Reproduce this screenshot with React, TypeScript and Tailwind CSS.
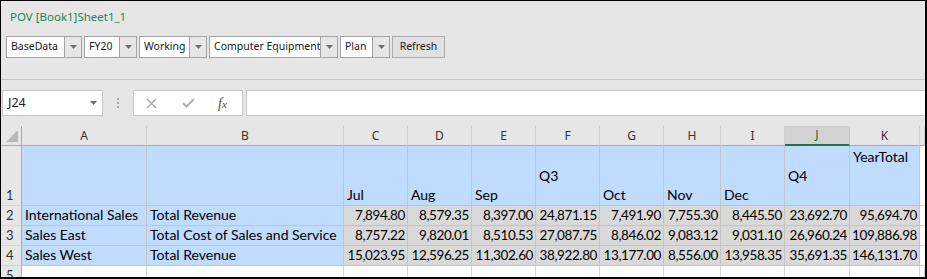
import React from "react";

const UI = "font-['Noto_Sans',_'Open_Sans',_sans-serif]";
const CELL = "font-['Lato',_'Noto_Sans',_sans-serif]";

function Arrow() {
  return (
    <svg width="7" height="4" viewBox="0 0 7 4">
      <polygon points="0,0 7,0 3.5,4" fill="#6e6e6e" />
    </svg>
  );
}

function Combo({ label, w }: { label: string; w: string }) {
  return (
    <div className="flex h-[22px]">
      <div className={`${w} h-full border border-[#a3a3a3] bg-white pl-[4px] flex items-center text-[10.5px] text-[#1a1a1a] whitespace-nowrap overflow-hidden`}>
        {label}
      </div>
      <div className="w-[17px] h-full border-y border-r border-[#a3a3a3] bg-[#e6e6e6] flex items-center justify-center">
        <Arrow />
      </div>
    </div>
  );
}

type Align = "top" | "mid" | "bot";

const headerCols = ["A", "B", "C", "D", "E", "F", "G", "H", "I", "J", "K", ""];

const row1: { t: string; a: Align }[] = [
  { t: "", a: "bot" },
  { t: "", a: "bot" },
  { t: "Jul", a: "bot" },
  { t: "Aug", a: "bot" },
  { t: "Sep", a: "bot" },
  { t: "Q3", a: "mid" },
  { t: "Oct", a: "bot" },
  { t: "Nov", a: "bot" },
  { t: "Dec", a: "bot" },
  { t: "Q4", a: "mid" },
  { t: "YearTotal", a: "top" },
];

const dataRows: string[][] = [
  ["International Sales", "Total Revenue", "7,894.80", "8,579.35", "8,397.00", "24,871.15", "7,491.90", "7,755.30", "8,445.50", "23,692.70", "95,694.70"],
  ["Sales East", "Total Cost of Sales and Service", "8,757.22", "9,820.01", "8,510.53", "27,087.75", "8,846.02", "9,083.12", "9,031.10", "26,960.24", "109,886.98"],
  ["Sales West", "Total Revenue", "15,023.95", "12,596.25", "11,302.60", "38,922.80", "13,177.00", "8,556.00", "13,958.35", "35,691.35", "146,131.70"],
];

function RowHead({ n }: { n: number }) {
  return (
    <div className={`${CELL} bg-[#e6e6e6] border-r border-r-[#ababab] border-b border-b-[#d4d4d4] flex items-end pl-[5px] pb-[1px] text-[13px] leading-[17px] text-[#333]`}>
      {n}
    </div>
  );
}

export default function App() {
  return (
    <div className="w-[927px] h-[279px] border-l border-t border-r-2 border-b-2 border-black bg-[#e6e6e6] overflow-hidden flex flex-col">
      {/* Smart View POV pane */}
      <div className={`${UI} h-[79px] shrink-0 border-b border-[#c6c6c6] pl-[5px] pt-[7px]`}>
        <div className="pl-[4px] text-[11.5px] leading-[18px] text-[#23845a]">POV [Book1]Sheet1_1</div>
        <div className="mt-[10px] flex gap-[2px]">
          <Combo label="BaseData" w="w-[59px]" />
          <Combo label="FY20" w="w-[36px]" />
          <Combo label="Working" w="w-[51px]" />
          <Combo label="Computer Equipment" w="w-[112px]" />
          <Combo label="Plan" w="w-[33px]" />
          <div className="w-[53px] h-[22px] border border-[#adadad] bg-[#e1e1e1] flex items-center justify-center text-[10.5px] text-[#1a1a1a]">
            Refresh
          </div>
        </div>
      </div>

      {/* Formula bar */}
      <div className={`${UI} h-[46px] shrink-0 pt-[10px] flex`}>
        <div className="ml-[1px] w-[101px] h-[26px] border border-[#c6c6c6] bg-white flex items-center justify-between pl-[5px] pr-[5px]">
          <span className="text-[12.5px] text-[#222]">J24</span>
          <Arrow />
        </div>
        <div className="w-[30px] h-[26px] flex flex-col items-center justify-center gap-[2px]">
          <div className="w-[2px] h-[2px] bg-[#a8a8a8]" />
          <div className="w-[2px] h-[2px] bg-[#a8a8a8]" />
          <div className="w-[2px] h-[2px] bg-[#a8a8a8]" />
        </div>
        <div className="w-[110px] h-[26px] border border-[#c6c6c6] bg-white flex items-center pl-[12px]">
          <svg width="11" height="11" viewBox="0 0 11 11">
            <path d="M1 1 L10 10 M10 1 L1 10" stroke="#a6a6a6" strokeWidth="1.3" />
          </svg>
          <svg className="ml-[25px]" width="13" height="10" viewBox="0 0 13 10">
            <path d="M1 5 L4.5 8.5 L12 1" stroke="#b0b0b0" strokeWidth="2" fill="none" />
          </svg>
          <span className="ml-[23px] font-['Liberation_Serif',_serif] italic text-[14px] text-[#505050]">
            f<span className="text-[11px]">x</span>
          </span>
        </div>
        <div className="ml-[3px] flex-1 h-[26px] border-y border-l border-[#c6c6c6] bg-white" />
      </div>

      {/* Grid */}
      <div className="grid grid-cols-[21px_125px_197px_64px_64px_64px_64px_64px_57px_64px_65px_70px_1fr] grid-rows-[20px_60px_20px_20px_20px_20px]">
        {/* header row */}
        <div className="bg-[#e6e6e6] border-r border-r-[#ababab] border-b border-b-[#ababab] relative">
          <svg className="absolute left-[5px] top-[4px]" width="13" height="13" viewBox="0 0 13 13">
            <polygon points="12,0 12,12 0,12" fill="#b9b9b9" />
          </svg>
        </div>
        {headerCols.map((c, i) =>
          c === "J" ? (
            <div key={i} className={`${UI} bg-[#d2d2d2] border-r border-r-[#c6c6c6] border-b-2 border-b-[#217346] flex items-center justify-center text-[12px] text-[#1f5f3d]`}>
              {c}
            </div>
          ) : (
            <div key={i} className={`${UI} bg-[#e6e6e6] border-r border-r-[#d0d0d0] border-b border-b-[#ababab] flex items-center justify-center text-[12px] text-[#333]`}>
              {c}
            </div>
          )
        )}

        {/* row 1 */}
        <RowHead n={1} />
        {row1.map((c, i) => (
          <div
            key={i}
            className={`${CELL} bg-[#bfdbfe] border-r border-b border-[#c4c4c4] flex pl-[3px] text-[14px] leading-[18px] text-black ${
              c.a === "bot" ? "items-end pb-[1px]" : c.a === "mid" ? "items-center" : "items-start pt-[2px]"
            }`}
          >
            {c.t}
          </div>
        ))}
        <div className="bg-white border-b border-[#d4d4d4]" />

        {/* rows 2-4 */}
        {dataRows.map((r, ri) => (
          <React.Fragment key={ri}>
            <RowHead n={ri + 2} />
            {r.map((v, ci) =>
              ci < 2 ? (
                <div key={ci} className={`${CELL} bg-[#bfdbfe] border-r border-b border-[#c4c4c4] flex items-end pl-[3px] pb-[1px] text-[14px] leading-[18px] text-black whitespace-nowrap`}>
                  {v}
                </div>
              ) : (
                <div key={ci} className={`${CELL} bg-[#d9d9d9] border-r border-b border-[#c4c4c4] flex items-end justify-end pr-[2px] pb-[1px] text-[13.5px] tracking-[-0.4px] leading-[18px] text-black whitespace-nowrap`}>
                  {v}
                </div>
              )
            )}
            <div className="bg-white border-b border-[#d4d4d4]" />
          </React.Fragment>
        ))}

        {/* row 5 */}
        <RowHead n={5} />
        {headerCols.map((_, i) => (
          <div key={i} className="bg-white border-r border-b border-[#d4d4d4]" />
        ))}
      </div>
    </div>
  );
}
